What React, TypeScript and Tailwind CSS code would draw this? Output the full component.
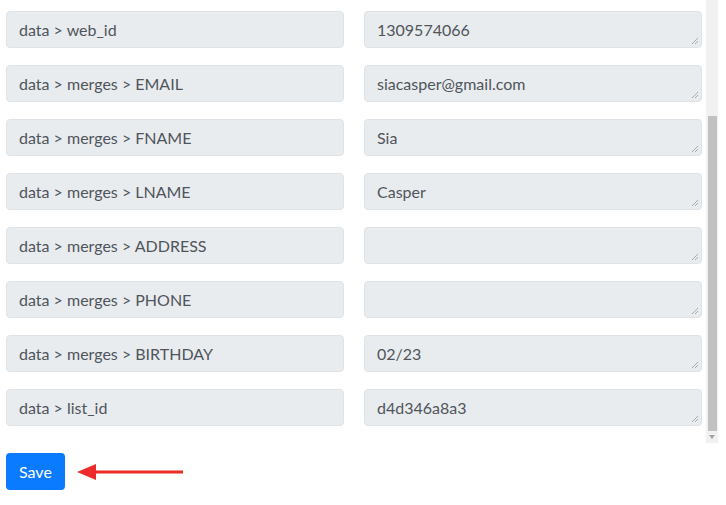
import React from "react";

const rows: [string, string][] = [
  ["data > web_id", "1309574066"],
  ["data > merges > EMAIL", "siacasper@gmail.com"],
  ["data > merges > FNAME", "Sia"],
  ["data > merges > LNAME", "Casper"],
  ["data > merges > ADDRESS", ""],
  ["data > merges > PHONE", ""],
  ["data > merges > BIRTHDAY", "02/23"],
  ["data > list_id", "d4d346a8a3"],
];

function Grip() {
  return (
    <svg className="absolute right-[2px] bottom-[2px]" width="8" height="8" viewBox="0 0 8 8">
      <path d="M7 1 L1 7 M7 4 L4 7" stroke="#a9adb2" strokeWidth="1" />
    </svg>
  );
}

export default function App() {
  return (
    <div
      className="w-[726px] h-[505px] bg-white text-[#4f555b]"
      style={{ fontFamily: "Lato, 'Open Sans', sans-serif" }}
    >
      <div className="flex h-[443px]">
        <div className="w-[706px] pl-[6px] pt-[11px] flex flex-col gap-[17px]">
          {rows.map(([l, r], i) => (
            <div key={i} className="flex gap-[20px]">
              <div className="w-[338px] h-[37px] rounded-[4px] border border-[#dfe3e7] bg-[#e9ecef] px-[12px] flex items-center text-[16px]">
                {l}
              </div>
              <div className="relative w-[338px] h-[37px] rounded-[4px] border border-[#dfe3e7] bg-[#e9ecef] px-[12px] flex items-center text-[16px]">
                {r}
                <Grip />
              </div>
            </div>
          ))}
        </div>
        <div className="w-[12px] bg-[#f1f1f1] flex flex-col items-center">
          <div className="h-[116px]" />
          <div className="w-[9px] h-[315px] bg-[#c1c1c1]" />
          <div className="mt-[4px] w-0 h-0 border-l-[3px] border-r-[3px] border-t-[4px] border-l-transparent border-r-transparent border-t-[#a3a3a3]" />
        </div>
      </div>
      <div className="flex items-center pl-[6px] pt-[10px] gap-[12px]">
        <button className="h-[37px] px-[13px] rounded-[4px] bg-[#0a7bff] text-white text-[16px]">
          Save
        </button>
        <svg width="106" height="18" viewBox="0 0 106 18">
          <path d="M0 9 L19 1 L19 17 Z" fill="#ec2b2b" />
          <rect x="17" y="7.5" width="89" height="3" fill="#ec2b2b" />
        </svg>
      </div>
    </div>
  );
}
